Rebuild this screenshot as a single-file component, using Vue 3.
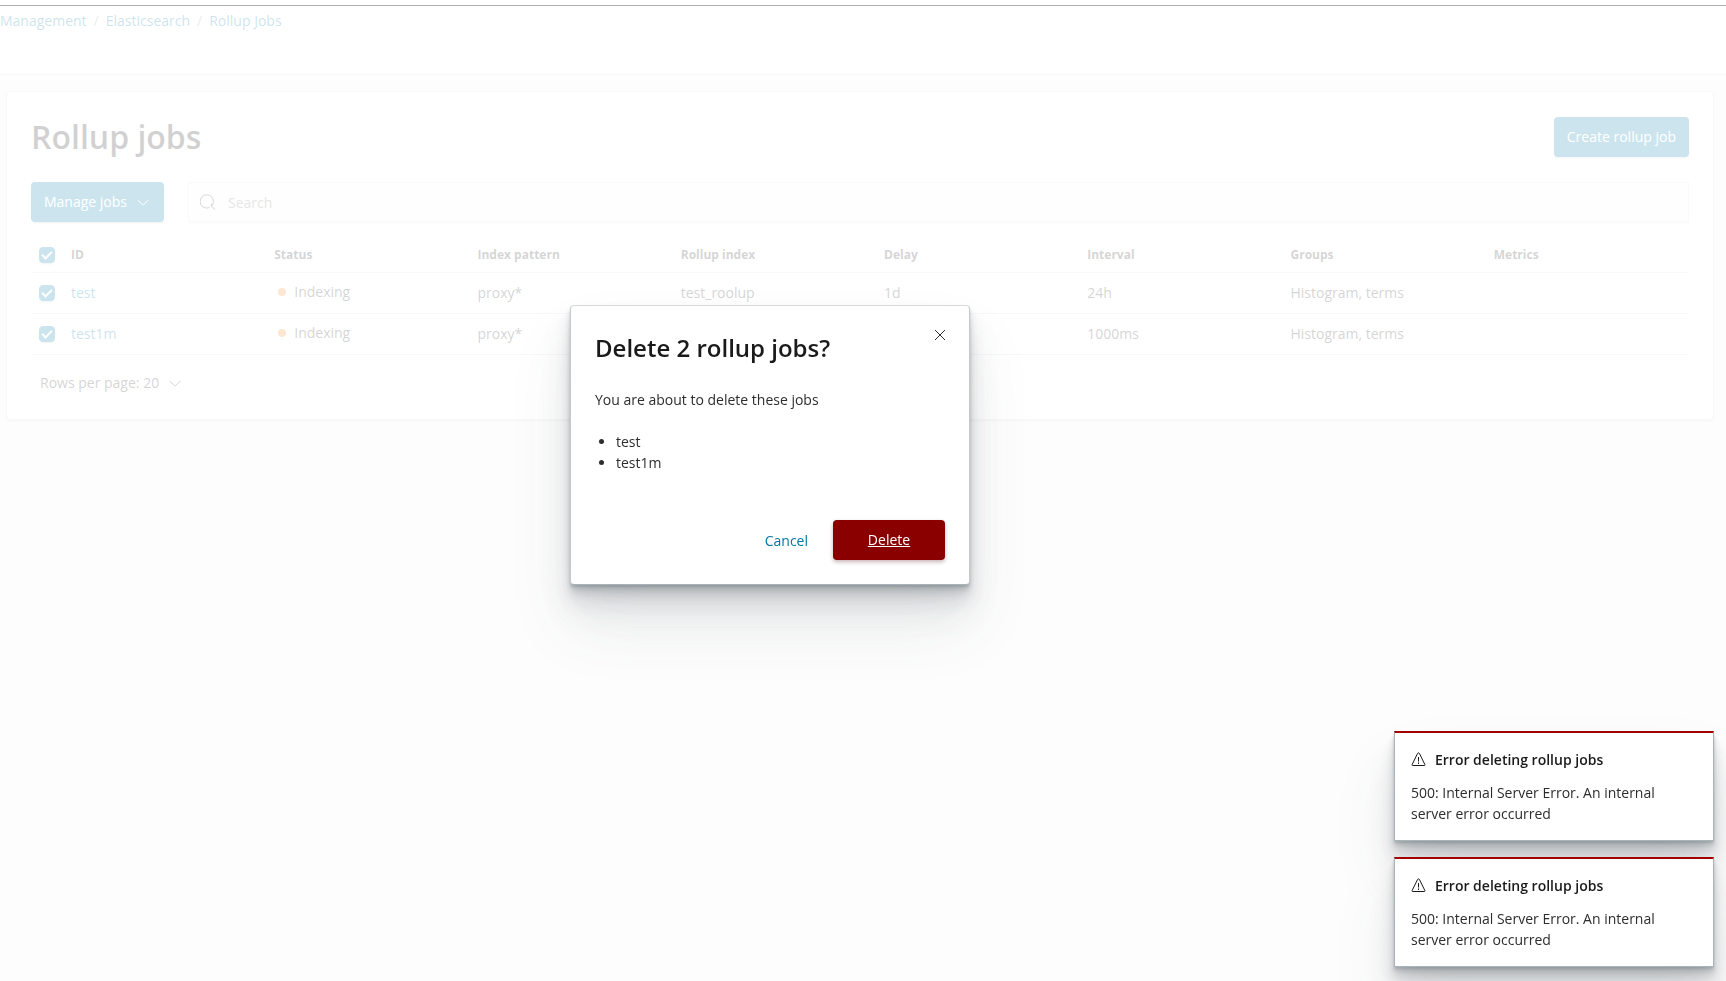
<script setup>
import { ref } from 'vue'

const crumbs = ['Management', 'Elasticsearch', 'Rollup Jobs']
const columns = ['ID', 'Status', 'Index pattern', 'Rollup index', 'Delay', 'Interval', 'Groups', 'Metrics']
const jobs = ref([
  { id: 'test', status: 'Indexing', pattern: 'proxy*', index: 'test_roolup', delay: '1d', interval: '24h', groups: 'Histogram, terms', metrics: '', selected: true },
  { id: 'test1m', status: 'Indexing', pattern: 'proxy*', index: '', delay: '', interval: '1000ms', groups: 'Histogram, terms', metrics: '', selected: true },
])
const allSelected = ref(true)
const search = ref('')
const toasts = [1, 2].map((id) => ({
  id,
  title: 'Error deleting rollup jobs',
  text: '500: Internal Server Error. An internal server error occurred',
}))
</script>

<template>
  <div class="app">
    <header class="header">
      <nav class="crumbs" aria-label="Breadcrumbs">
        <template v-for="(crumb, i) in crumbs" :key="crumb">
          <span v-if="i" class="slash">/</span>
          <a href="#">{{ crumb }}</a>
        </template>
      </nav>
    </header>

    <main class="panel">
      <div class="title-row">
        <h1>Rollup jobs</h1>
        <button class="btn primary" type="button">Create rollup job</button>
      </div>

      <div class="tools">
        <button class="btn primary" type="button">
          Manage jobs
          <svg class="icon" viewBox="0 0 16 16"><path d="M2.500 6 7.600 10.700q.4.400.8 0L13.500 6" /></svg>
        </button>
        <label class="search">
          <svg class="icon" viewBox="0 0 16 16"><path d="M9.300 13.500A6.600 6.600 0 1 1 11.300 12.200M11.600 9.800 11.300 12.200 15.300 15.800" /></svg>
          <input v-model="search" type="search" placeholder="Search" aria-label="Search" />
        </label>
      </div>

      <table>
        <thead>
          <tr>
            <th class="check"><input v-model="allSelected" type="checkbox" aria-label="Select all rows" /></th>
            <th v-for="c in columns" :key="c" scope="col">{{ c }}</th>
          </tr>
        </thead>
        <tbody>
          <tr v-for="job in jobs" :key="job.id">
            <td class="check"><input v-model="job.selected" type="checkbox" :aria-label="`Select ${job.id}`" /></td>
            <td><a href="#">{{ job.id }}</a></td>
            <td><span class="health"><i></i>{{ job.status }}</span></td>
            <td>{{ job.pattern }}</td>
            <td>{{ job.index }}</td>
            <td>{{ job.delay }}</td>
            <td>{{ job.interval }}</td>
            <td>{{ job.groups }}</td>
            <td>{{ job.metrics }}</td>
          </tr>
        </tbody>
      </table>

      <button class="pager" type="button">
        Rows per page: 20
        <svg class="icon" viewBox="0 0 16 16"><path d="M2.500 6 7.600 10.700q.4.400.8 0L13.500 6" /></svg>
      </button>
    </main>

    <div class="overlay">
      <section class="modal" role="dialog" aria-labelledby="modal-title">
        <button class="close" type="button" aria-label="Close">
          <svg class="icon" viewBox="0 0 16 16"><path d="m3 3 10 10M13 3 3 13" /></svg>
        </button>
        <h2 id="modal-title">Delete 2 rollup jobs?</h2>
        <p>You are about to delete these jobs</p>
        <ul>
          <li v-for="job in jobs" :key="job.id">{{ job.id }}</li>
        </ul>
        <footer>
          <button class="btn cancel" type="button">Cancel</button>
          <button class="btn danger" type="button">Delete</button>
        </footer>
      </section>
    </div>

    <div class="toasts">
      <section v-for="t in toasts" :key="t.id" class="toast" role="alert">
        <h3>
          <svg class="icon" viewBox="0 0 16 16">
            <path d="M6.600 1.400a1 1 0 0 1 1.800 0l5.500 11.200a.7.700 0 0 1-.7.900H1.800a.7.700 0 0 1-.7-.9zM7.500 5v4.500M7.500 10.500v1.500" />
          </svg>
          {{ t.title }}
        </h3>
        <p>{{ t.text }}</p>
      </section>
    </div>
  </div>
</template>

<style>
body {
  background: #f5f5f5;
}
</style>

<style scoped>
.app,
.app *,
.app::before,
.app *::after {
  box-sizing: border-box;
}
.app {
  font: 14px/21px 'Open Sans', sans-serif;
  color: #2d2d2d;
  background: #f5f5f5;
  min-height: 100vh;
  padding-top: 5px;
}
.app::before {
  content: '';
  position: absolute;
  inset: 0 0 auto;
  height: 6px;
  background: #fff;
  border-bottom: 1px solid #b0b0b0;
  z-index: 2;
}
a {
  color: #0079a5;
  text-decoration: none;
}
h1,
h2,
h3,
p,
ul {
  margin: 0;
}
button {
  font: inherit;
  border: 0;
  background: none;
  cursor: pointer;
}
.icon {
  width: 16px;
  height: 16px;
  flex: none;
  fill: none;
  stroke: currentColor;
}
.header {
  height: 70px;
  padding-top: 5px;
  background: #fff;
  border-bottom: 1px solid #d9d9d9;
}
.crumbs {
  display: flex;
}
.slash {
  color: #999;
  margin: 0 7px;
}
.panel {
  margin: 16px 12px 0 6px;
  padding: 25px 24px 16px;
  background: #fff;
  border: 1px solid #d9d9d9;
  border-radius: 4px;
  box-shadow: 0 2px 2px -1px rgba(153, 153, 153, 0.3), 0 1px 5px -2px rgba(153, 153, 153, 0.3);
}
.title-row {
  display: flex;
  justify-content: space-between;
  align-items: center;
}
h1 {
  font-size: 32px;
  line-height: 40px;
  font-weight: 600;
  color: #1a1a1a;
}
.btn {
  height: 40px;
  padding: 0 13px;
  border-radius: 4px;
  display: flex;
  align-items: center;
  justify-content: center;
  gap: 8px;
}
.primary,
.danger {
  padding-bottom: 1px;
}
.primary {
  background: #0079a5;
  color: #fff;
  box-shadow: 0 2px 2px -1px rgba(0, 54, 73, 0.3);
}
.tools {
  display: flex;
  gap: 24px;
  margin: 25px 0 16px;
}
.search {
  flex: 1;
  height: 40px;
  display: flex;
  align-items: center;
  gap: 12px;
  padding: 0 11px;
  background: #fafafa;
  border: 1px solid #e4e4e4;
  box-shadow: 0 2px 2px -1px rgba(153, 153, 153, 0.3);
}
.search input {
  flex: 1;
  font: inherit;
  border: 0;
  padding: 0;
  outline: 0;
  background: none;
}
.search input::placeholder {
  color: #808080;
}
table {
  width: 100%;
  table-layout: fixed;
  border-collapse: collapse;
}
th,
td {
  text-align: left;
  padding: 0 8px;
  height: 41px;
  border-bottom: 1px solid #d9d9d9;
}
th {
  height: 34px;
  font-size: 12px;
  line-height: 18px;
  font-weight: 700;
}
.check {
  width: 32px;
}
.check input {
  appearance: none;
  display: block;
  width: 16px;
  height: 16px;
  margin: 0;
  border-radius: 4px;
  background: #fff;
  border: 1px solid #d9d9d9;
  box-shadow: 0 2px 2px -1px rgba(0, 54, 73, 0.3);
}
.check input:checked {
  background: #0079a5;
  border-color: #0079a5;
}
.check input:checked::after {
  content: '';
  display: block;
  width: 6px;
  height: 10px;
  margin: 1px 0 0 4px;
  border: solid #fff;
  border-width: 0 2px 2px 0;
  transform: rotate(45deg);
}
.health {
  display: flex;
  align-items: center;
  gap: 8px;
  padding: 0 0 2px 4px;
}
.health i {
  width: 8px;
  height: 8px;
  border-radius: 50%;
  background: #f5821f;
}
.pager {
  display: flex;
  align-items: center;
  gap: 8px;
  height: 24px;
  margin: 16px 0 8px;
  padding: 0 9px;
  color: inherit;
}
.overlay {
  position: fixed;
  inset: 0;
  display: flex;
  align-items: center;
  justify-content: center;
  padding: 0 186px 91px 0;
  background: rgba(255, 255, 255, 0.8);
}
.modal,
.toast {
  background: #fff;
  border: 1px solid #a9b4ba;
  box-shadow: 0 40px 64px rgba(65, 78, 84, 0.1), 0 24px 32px rgba(65, 78, 84, 0.1),
    0 16px 16px rgba(65, 78, 84, 0.12), 0 8px 8px rgba(65, 78, 84, 0.15),
    0 4px 4px rgba(65, 78, 84, 0.15), 0 2px 2px rgba(65, 78, 84, 0.15);
}
.modal {
  position: relative;
  width: 400px;
  padding: 24px;
  border-color: #d9d9d9 #c3cbcf #a9b4ba;
  border-radius: 4px;
}
.modal h2 {
  font-size: 24px;
  line-height: 36px;
  font-weight: 600;
  color: #1a1a1a;
}
.modal p {
  margin: 23px 0 21px;
}
.modal ul {
  padding-left: 21px;
}
.close {
  position: absolute;
  top: 17px;
  right: 17px;
  width: 24px;
  height: 24px;
  padding: 4px;
  color: #2d2d2d;
}
.modal footer {
  display: flex;
  justify-content: flex-end;
  gap: 12px;
  margin-top: 47px;
}
.cancel {
  color: #0079a5;
}
.danger {
  min-width: 112px;
  background: #8a0000;
  color: #fff;
  text-decoration: underline;
  box-shadow: 0 2px 4px rgba(74, 0, 0, 0.3);
}
.toasts {
  position: fixed;
  right: 12px;
  bottom: 14px;
  width: 320px;
  display: flex;
  flex-direction: column;
  gap: 16px;
}
.toast {
  padding: 16px;
  border-top: 2px solid #a30000;
}
.toast h3 {
  display: flex;
  align-items: center;
  gap: 8px;
  margin-bottom: 12px;
  font-size: 14px;
  font-weight: 600;
  color: #1a1a1a;
}
</style>
